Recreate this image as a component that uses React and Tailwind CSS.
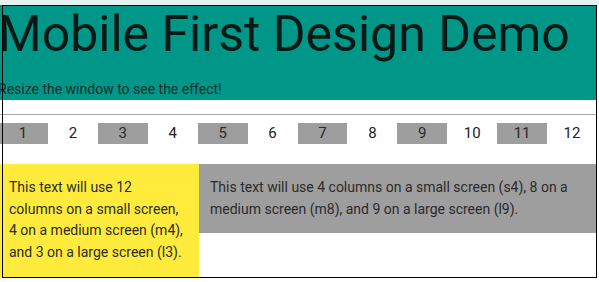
const cells = Array.from({ length: 12 }, (_, i) => i + 1);

export default function App() {
  return (
    <div className="min-h-[282px] w-[599px] bg-white font-['Roboto',sans-serif]">
      <div className="h-[5px] bg-[#e4f3f1]" />
      <div className="relative ml-[2px] h-[273px] w-[595px] bg-white">
        <div className="-ml-[4px] w-[599px]">
          <header className="h-[95px] bg-[#009688] text-[#051917]">
            <h1 className="text-[50px] leading-[58px]">Mobile First Design Demo</h1>
            <p className="mt-[17px] text-[14px] leading-[18px] text-[#0d2f2b]">
              Resize the window to see the effect!
            </p>
          </header>
          <div className="mt-[14px] h-px bg-[#a8a8a8]" />
          <div className="mt-[8px] grid grid-cols-12">
            {cells.map((n) => (
              <div
                key={n}
                className={`flex h-[21px] items-center justify-center text-[15px] ${
                  n % 2 ? "bg-[#9e9e9e] text-[#2a2a2a]" : "text-[#222]"
                }`}
              >
                {n}
              </div>
            ))}
          </div>
          <div className="mt-[20px] flex items-start text-[14px] leading-[21.7px] text-[#2b2b2b]">
            <div className="w-[201px] shrink-0 bg-[#ffeb3b] py-[13px] pl-[11px] pr-[14px]">
              This text will use 12 columns on a small screen, 4 on a medium screen (m4), and 3 on a large screen (l3).
            </div>
            <div className="flex-1 bg-[#9e9e9e] py-[13px] pl-[11px] pr-[10px]">
              This text will use 4 columns on a small screen (s4), 8 on a medium screen (m8), and 9 on a large screen (l9).
            </div>
          </div>
        </div>
        <div className="pointer-events-none absolute inset-0 border border-black" />
      </div>
    </div>
  );
}
